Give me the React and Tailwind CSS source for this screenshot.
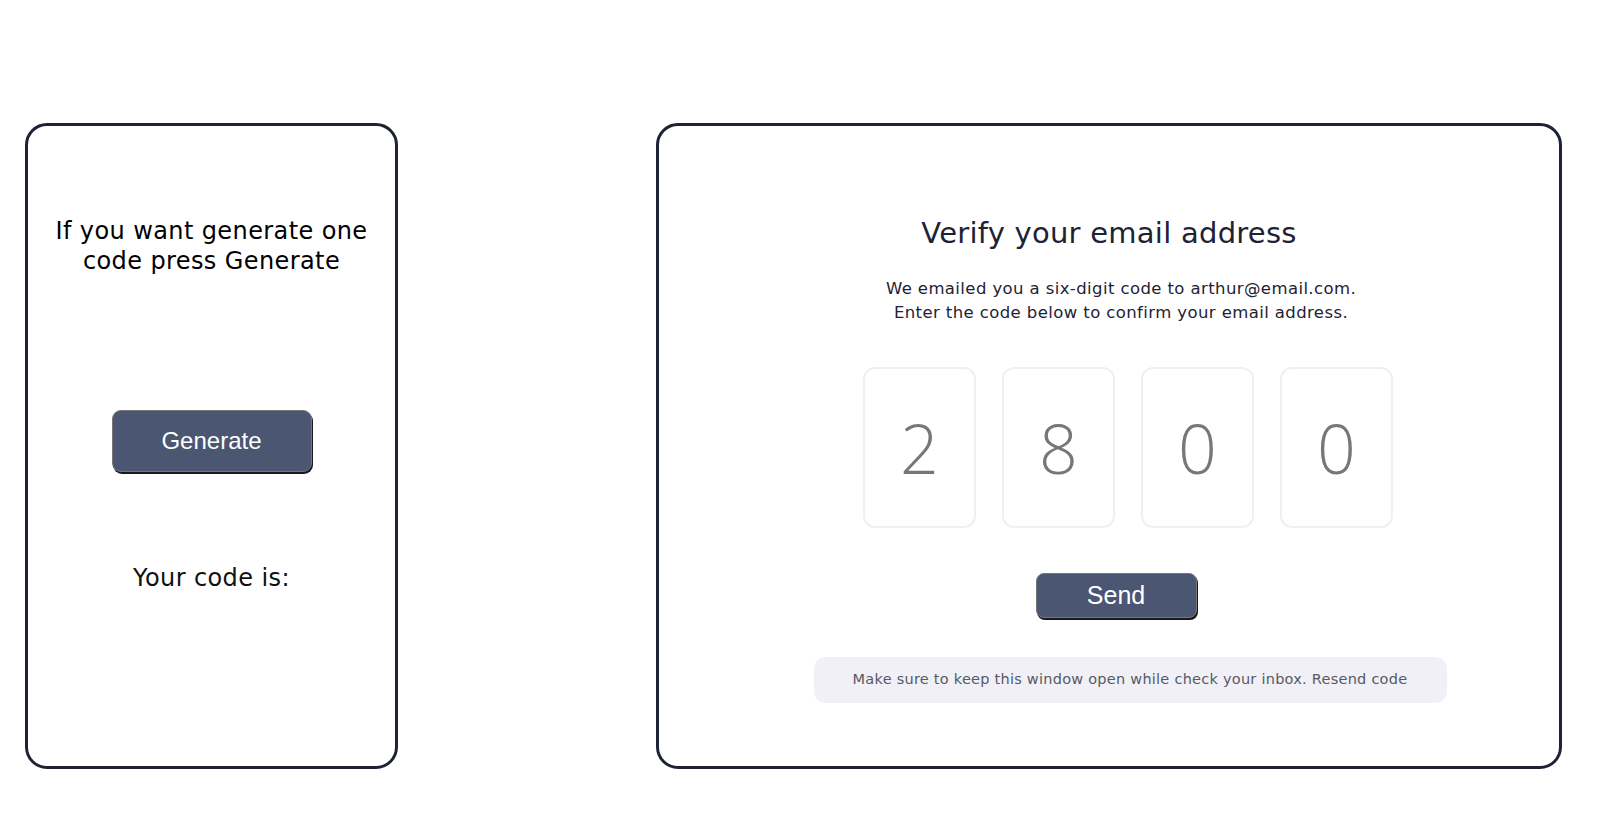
import React from "react";

const font = { fontFamily: '"DejaVu Sans", "Open Sans", sans-serif' };

export default function App() {
  const digits = ["2", "8", "0", "0"];
  return (
    <div className="w-[1613px] h-[827px] bg-white" style={font}>
      <div className="flex items-start pt-[123px] pl-[25px] gap-[258px]">
        {/* Left card */}
        <div className="w-[373px] h-[646px] border-[3px] border-[#1e2235] rounded-[22px] flex flex-col items-center pt-[90px]">
          <h2 className="text-[24px] leading-[30px] tracking-[0.4px] font-normal text-black text-center w-[345px]">
            If you want generate one code press Generate
          </h2>
          <button
            className="mt-[134px] w-[200px] h-[62px] rounded-[9px] bg-[#4a5672] text-white text-[24px] border border-[#777] shadow-[1px_2px_0_#1a1a1a]"
            style={{ fontFamily: '"Liberation Sans", Arial, sans-serif' }}
          >
            Generate
          </button>
          <p className="mt-[91px] text-[24px] leading-[30px] tracking-[0.4px] font-normal text-[#111]">Your code is:</p>
        </div>

        {/* Right card */}
        <div className="w-[906px] h-[646px] border-[3px] border-[#1e2235] rounded-[22px] flex flex-col items-center pt-[89px]">
          <h1 className="text-[29px] leading-[36px] tracking-[0.25px] font-normal text-[#1e2235]">Verify your email address</h1>
          <p className="mt-[26px] ml-[24px] text-[16.5px] leading-[24px] tracking-[0.4px] text-[#1e2235] text-center">
            We emailed you a six-digit code to arthur@email.com.
            <br />
            Enter the code below to confirm your email address.
          </p>
          <div className="mt-[42px] ml-[38px] flex gap-[26px]">
            {digits.map((d, i) => (
              <div
                key={i}
                className="w-[113px] h-[161px] border-2 border-[#efeff5] rounded-[12px] flex items-center justify-center text-[68px] font-light text-[#777]"
                style={{ fontFamily: '"Open Sans", sans-serif' }}
              >
                {d}
              </div>
            ))}
          </div>
          <button
            className="mt-[45px] ml-[14px] w-[161px] h-[45px] rounded-[8px] bg-[#4a5672] text-white text-[25px] border border-[#777] shadow-[1px_2px_0_#1a1a1a]"
            style={{ fontFamily: '"Liberation Sans", Arial, sans-serif' }}
          >
            Send
          </button>
          <div className="mt-[39px] ml-[42px] w-[633px] h-[46px] rounded-[12px] bg-[#f0f0f6] flex items-center justify-center text-[14.5px] tracking-[0.25px] text-[#555a66]">
            Make sure to keep this window open while check your inbox. Resend code
          </div>
        </div>
      </div>
    </div>
  );
}
